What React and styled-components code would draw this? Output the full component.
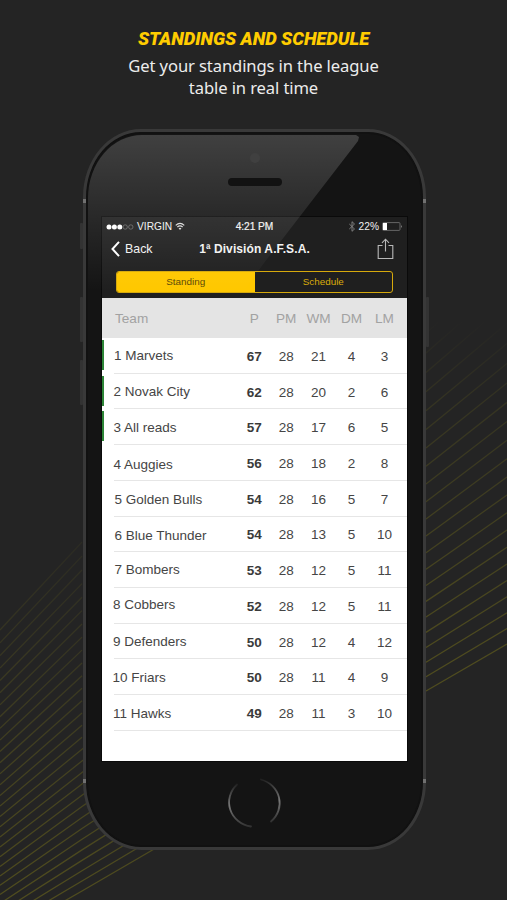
import React from "react";
import styled, { createGlobalStyle } from "styled-components";

const Global = createGlobalStyle`
  * { box-sizing: border-box; }
  html, body { margin: 0; background: #242424; overflow: hidden; }
`;

const Page = styled.main`
  position: relative;
  width: 507px;
  height: 900px;
  overflow: hidden;
  background: #242424;
  display: flex;
  flex-direction: column;
  align-items: center;
  font-family: "Liberation Sans", Arial, sans-serif;
`;

const Rays = styled.svg`
  position: absolute;
  inset: 0;
`;

const Heading = styled.header`
  position: relative;
  height: 129px;
  padding-top: 28px;
  display: flex;
  flex-direction: column;
  align-items: center;
`;

const Title = styled.h1`
  margin: 0;
  font: italic 900 18.4px/22px Roboto, sans-serif;
  letter-spacing: -0.06px;
  color: #fc0;
  white-space: nowrap;
`;

const Subtitle = styled.p`
  margin: 5px 0 0;
  font: 400 16.6px/21.5px "Noto Sans", sans-serif;
  letter-spacing: -0.11px;
  color: #ececec;
  text-align: center;
  white-space: nowrap;
`;

const Phone = styled.section`
  position: relative;
  width: 343px;
  height: 721px;
  margin-left: 2px;
  border: 3.5px solid #393939;
  border-radius: 58px / 68px;
  background: #141414;
  box-shadow: inset 0 0 0 2px #111;
  display: flex;
  flex-direction: column;
  align-items: center;
`;

const SideButton = styled.i`
  position: absolute;
  ${(p) => p.$side}: -6px;
  top: ${(p) => p.$top}px;
  width: 3px;
  height: ${(p) => p.$height}px;
  background: #333;
  border-radius: 1px;
`;

const Antenna = styled.i`
  position: absolute;
  ${(p) => p.$side}: -3px;
  top: ${(p) => p.$top}px;
  width: 3px;
  height: 4px;
  background: #707070;
`;

const Glare = styled.div`
  position: absolute;
  z-index: 2;
  left: 2px;
  top: 3px;
  width: 290px;
  height: 200px;
  border-top-left-radius: 54px 63px;
  background: linear-gradient(rgba(255,255,255,.19), rgba(255,255,255,.085) 42%, rgba(255,255,255,0) 78%);
  clip-path: polygon(0 0, 268px 0, 271px 2px, 270px 6px, 176px 128px, 124px 200px, 0 200px);
  pointer-events: none;
`;

const PhoneTop = styled.div`
  width: 100%;
  height: 85px;
  padding-top: 21px;
  display: flex;
  flex-direction: column;
  align-items: center;
  gap: 18px;
`;

const Camera = styled.i`
  position: relative;
  z-index: 3;
  width: 10px;
  height: 10px;
  border-radius: 50%;
  background: #404040;
`;

const Speaker = styled.i`
  position: relative;
  z-index: 3;
  width: 54px;
  height: 8px;
  margin-top: -3px;
  border-radius: 4px;
  background: #121212;
`;

const Screen = styled.div`
  width: 305px;
  height: 543.5px;
  background: #fff;
  outline: 1px solid #0a0a0a;
  display: flex;
  flex-direction: column;
`;

const AppBar = styled.div`
  height: 80.5px;
  flex: none;
  background: #1f1f1f;
  color: #f2f2f2;
`;

const StatusBar = styled.div`
  height: 18px;
  padding: 1px 4px 0 4px;
  display: grid;
  grid-template-columns: 1fr auto 1fr;
  align-items: center;
  font-size: 10.2px;
  white-space: nowrap;
`;

const StatusGroup = styled.div`
  display: flex;
  align-items: center;
  gap: 3px;
  justify-content: ${(p) => (p.$end ? "flex-end" : "flex-start")};
`;

const Clock = styled.span`
  letter-spacing: -0.05px;
  -webkit-text-stroke: 0.2px #f2f2f2;
`;

const NavBar = styled.div`
  height: 27px;
  padding: 1px 13px 0 9px;
  display: grid;
  grid-template-columns: 1fr auto 1fr;
  align-items: center;
`;

const Back = styled.div`
  display: flex;
  align-items: center;
  gap: 5px;
  font-size: 12.4px;
`;

const NavTitle = styled.h2`
  margin: 0 0 0 4px;
  font-size: 12px;
  font-weight: 700;
  letter-spacing: 0.1px;
  white-space: nowrap;
`;

const Share = styled.svg`
  justify-self: end;
`;

const Segmented = styled.div`
  display: flex;
  width: 277px;
  height: 22px;
  margin: 8.5px 0 0 14px;
  border: 1px solid #d6a90c;
  border-radius: 3px;
  overflow: hidden;
`;

const Segment = styled.div`
  flex: 1;
  display: flex;
  align-items: center;
  justify-content: center;
  font-size: 9.9px;
  color: ${(p) => (p.$active ? "#5c4a08" : "#d9ab0a")};
  background: ${(p) => (p.$active ? "#ffc800" : "transparent")};
`;

const gridColumns = `grid-template-columns: 136px 32.5px 31.5px 33px 33px 33px;`;

const TableHead = styled.div`
  display: grid;
  ${gridColumns}
  align-items: center;
  flex: none;
  height: 40.5px;
  padding-top: 1px;
  background: #e4e4e4;
  color: #a2a2a2;
  font-size: 13.6px;
  text-align: center;
`;

const HeadTeam = styled.span`
  padding-left: 13px;
  text-align: left;
`;

const Row = styled.div`
  position: relative;
  display: grid;
  ${gridColumns}
  align-items: center;
  flex: none;
  height: 35.72px;
  padding-top: 1px;
  font-size: 13.5px;
  color: #454545;
  text-align: center;
  background: linear-gradient(#e6e6e6, #e6e6e6) 12px 100% / 293px 1px no-repeat;
`;

const Marker = styled.i`
  position: absolute;
  left: 0;
  top: 2px;
  width: 2px;
  height: 30px;
  background: #2d8537;
`;

const Team = styled.span`
  padding-left: ${(p) => p.$indent}px;
  text-align: left;
  white-space: nowrap;
  margin-top: ${(p) => p.$lift}px;
`;

const Points = styled.b`
  color: #3a3a3a;
`;

const HomeButton = styled.svg`
  margin-top: 14px;
`;

// place, team, P, PM, WM, DM, LM, left indent, vertical offset
const teams = [
  [1, "Marvets", 67, 28, 21, 4, 3, 12, -1],
  [2, "Novak City", 62, 28, 20, 2, 6, 11.5, -1],
  [3, "All reads", 57, 28, 17, 6, 5, 11.5, -1],
  [4, "Auggies", 56, 28, 18, 2, 8, 11.5, 1],
  [5, "Golden Bulls", 54, 28, 16, 5, 7, 12.5, 0],
  [6, "Blue Thunder", 54, 28, 13, 5, 10, 12.5, 1],
  [7, "Bombers", 53, 28, 12, 5, 11, 12.5, -2],
  [8, "Cobbers", 52, 28, 12, 5, 11, 11, -3],
  [9, "Defenders", 50, 28, 12, 4, 12, 11, -2],
  [10, "Friars", 50, 28, 11, 4, 9, 10.5, -1],
  [11, "Hawks", 49, 28, 11, 3, 10, 11, -1],
];

const rays = Array.from({ length: 30 }, (_, k) => {
  const q = k * k;
  return [
    [0, 938 - 8.3 * k - 0.08 * q],
    [82, 891 - 10 * k - 0.07 * q],
    [426, 691 - 14.1 * k - 0.14 * q],
    [507, 644 - 15.3 * k - 0.14 * q],
  ];
});

function Background() {
  return (
    <Rays width="507" height="900">
      <defs>
        <linearGradient id="fadeLeft" gradientUnits="userSpaceOnUse" x1="0" y1="530" x2="0" y2="890">
          <stop offset="0" stopColor="#7a7418" stopOpacity=".08" />
          <stop offset="1" stopColor="#7a7418" stopOpacity=".5" />
        </linearGradient>
        <linearGradient id="fadeRight" gradientUnits="userSpaceOnUse" x1="0" y1="320" x2="0" y2="660">
          <stop offset="0" stopColor="#7a7418" stopOpacity="0" />
          <stop offset=".25" stopColor="#7a7418" stopOpacity=".2" />
          <stop offset="1" stopColor="#7a7418" stopOpacity=".5" />
        </linearGradient>
      </defs>
      {rays.map(([a, b, c, d], i) => (
        <g key={i} fill="none" strokeWidth="1.25">
          <path d={`M${a} L${b} ${i < 14 ? `L${c}` : ""}`} stroke="url(#fadeLeft)" />
          <path d={`M${c} L${d}`} stroke="url(#fadeRight)" />
        </g>
      ))}
    </Rays>
  );
}

function SignalDots() {
  return (
    <svg width="28" height="8" viewBox="0 0 28 8">
      {[3, 8.4, 13.8].map((x) => (
        <circle key={x} cx={x} cy="4" r="2.5" fill="#fff" />
      ))}
      {[19.2, 24.8].map((x) => (
        <circle key={x} cx={x} cy="4" r="2.2" fill="none" stroke="#777" strokeWidth=".7" />
      ))}
    </svg>
  );
}

function Wifi() {
  return (
    <svg width="10" height="9" viewBox="0 0 11 9" fill="none" stroke="#ddd" strokeWidth="1.3">
      <path d="M.8 3.2 Q5.5 -1 10.2 3.2" />
      <path d="M2.6 5 Q5.5 2.4 8.4 5" />
      <path d="M5.5 8.3 L3.9 6.5 Q5.5 5.2 7.1 6.5 Z" fill="#ddd" stroke="none" />
    </svg>
  );
}

function Bluetooth() {
  return (
    <svg width="8" height="11" viewBox="0 0 8 11" fill="none" stroke="#868686" strokeWidth=".9">
      <path d="M1.3 3 L6.5 8 L4 10.3 V.7 L6.5 3 L1.3 8" />
    </svg>
  );
}

function Battery() {
  return (
    <svg width="21" height="9" viewBox="0 0 21 9">
      <rect x=".5" y=".6" width="17.5" height="7.8" rx="1" fill="none" stroke="#777" strokeWidth=".8" />
      <rect x="1" y="1" width="4" height="7" fill="#fff" />
      <path d="M19 3 Q20.3 4.5 19 6 Z" fill="#bbb" />
    </svg>
  );
}

export default function App() {
  return (
    <Page>
      <Global />
      <Background />
      <Heading>
        <Title>STANDINGS AND SCHEDULE</Title>
        <Subtitle>
          Get your standings in the league
          <br />
          table in real time
        </Subtitle>
      </Heading>
      <Phone>
        <SideButton $side="left" $top={91} $height={26} />
        <SideButton $side="left" $top={165} $height={45} />
        <SideButton $side="left" $top={228} $height={45} />
        <SideButton $side="right" $top={165} $height={50} />
        <Antenna $side="left" $top={67} />
        <Antenna $side="right" $top={67} />
        <Antenna $side="left" $top={647} />
        <Antenna $side="right" $top={647} />
        <Glare />
        <PhoneTop>
          <Camera />
          <Speaker />
        </PhoneTop>
        <Screen>
          <AppBar>
            <StatusBar>
              <StatusGroup>
                <SignalDots />
                VIRGIN
                <Wifi />
              </StatusGroup>
              <Clock>4:21 PM</Clock>
              <StatusGroup $end>
                <Bluetooth />
                22%
                <Battery />
              </StatusGroup>
            </StatusBar>
            <NavBar>
              <Back>
                <svg width="9" height="16" viewBox="0 0 9 15" fill="none" stroke="#fff" strokeWidth="2">
                  <path d="M8 .4 L1.5 7.5 L8 14.6" />
                </svg>
                Back
              </Back>
              <NavTitle>1ª División A.F.S.A.</NavTitle>
              <Share width="17" height="22" viewBox="0 0 17 22" fill="none" stroke="#b8b8b8" strokeWidth="1.1">
                <path d="M5.5 7.5 H1.2 V20.5 H15.8 V7.5 H11.5" />
                <path d="M8.5 13.5 V1.3 M5 4.8 L8.5 1.2 L12 4.8" />
              </Share>
            </NavBar>
            <Segmented>
              <Segment $active>Standing</Segment>
              <Segment>Schedule</Segment>
            </Segmented>
          </AppBar>
          <TableHead>
            <HeadTeam>Team</HeadTeam>
            <span>P</span>
            <span>PM</span>
            <span>WM</span>
            <span>DM</span>
            <span>LM</span>
          </TableHead>
          {teams.map(([place, name, p, pm, wm, dm, lm, indent, lift]) => (
            <Row key={place}>
              {place <= 3 && <Marker />}
              <Team $indent={indent} $lift={lift}>
                {place} {name}
              </Team>
              <Points>{p}</Points>
              <span>{pm}</span>
              <span>{wm}</span>
              <span>{dm}</span>
              <span>{lm}</span>
            </Row>
          ))}
        </Screen>
        <HomeButton width="58" height="56" viewBox="0 0 58 56" fill="none" strokeWidth="1.8" strokeLinecap="round">
          <defs>
            <linearGradient id="ringLeft" x1="0" y1="0" x2="0" y2="1">
              <stop offset="0" stopColor="#222" />
              <stop offset=".5" stopColor="#777" />
              <stop offset="1" stopColor="#333" />
            </linearGradient>
          </defs>
          <path d="M11 9.5 A25.5 24.5 0 0 0 25 51.5" stroke="url(#ringLeft)" />
          <path d="M35 4.5 A25.5 24.5 0 0 1 45 46.5" stroke="url(#ringLeft)" />
        </HomeButton>
      </Phone>
    </Page>
  );
}
